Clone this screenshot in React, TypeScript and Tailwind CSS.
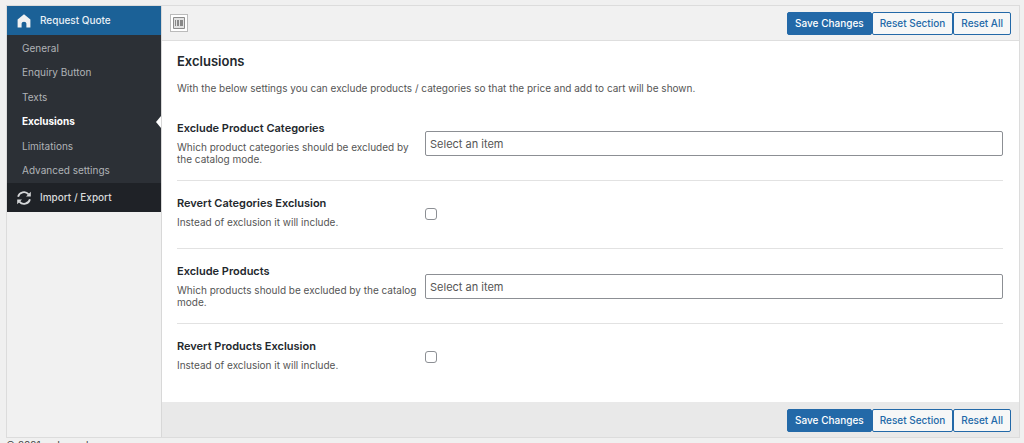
import type { ReactNode } from 'react'

const navItems = ['General', 'Enquiry Button', 'Texts', 'Exclusions', 'Limitations', 'Advanced settings']

function ActionButtons() {
  return (
    <div className="flex">
      <button type="button" className="h-[23px] px-[7px] rounded-xs border border-[#2369a8] bg-[#2369a8] text-white text-[10px] font-medium">
        Save Changes
      </button>
      <button type="button" className="h-[23px] px-[7px] rounded-xs border border-[#2369a8] bg-[#f6f7f7] text-[#2369a8] text-[10px] font-medium">
        Reset Section
      </button>
      <button type="button" className="h-[23px] px-[7px] rounded-xs border border-[#2369a8] bg-[#f6f7f7] text-[#2369a8] text-[10px] font-medium">
        Reset All
      </button>
    </div>
  )
}

interface FieldProps {
  id: string
  title: string
  description: string
  children: ReactNode
}

function Field({ id, title, description, children }: FieldProps) {
  return (
    <div className="flex min-h-[68px] py-[15px] border-b border-[#e2e2e2] last:border-b-0">
      <div className="w-[248px] shrink-0 pr-2">
        <label htmlFor={id} className="block text-[11px] leading-[14px] font-semibold text-[#23282d]">
          {title}
        </label>
        <p className="mt-1.5 text-[10px] leading-[12px] text-[#555]">{description}</p>
      </div>
      <div className="flex-1 pt-2.5">{children}</div>
    </div>
  )
}

function SelectField({ id }: { id: string }) {
  return (
    <input
      id={id}
      type="text"
      placeholder="Select an item"
      className="block w-full h-[25px] px-1 rounded-xs border border-[#8c8f94] bg-white text-[11px] text-[#444] placeholder:text-[#555]"
    />
  )
}

function CheckField({ id }: { id: string }) {
  return (
    <input
      id={id}
      type="checkbox"
      className="block mt-0.5 size-3 appearance-none rounded-[3px] border border-[#8c8f94] bg-white checked:bg-[#2369a8]"
    />
  )
}

export default function App() {
  return (
    <div className="h-screen overflow-hidden bg-[#f0f0f0] pt-[5px] pl-1.5 pr-1 font-['Inter','Liberation_Sans',sans-serif]">
      <div className="flex border border-[#dcdcdc] bg-[#f1f1f1]">
        <aside className="w-[155px] shrink-0 border-r border-[#d8d8d8]">
          <nav>
            <a href="#quote" className="flex items-center gap-[9px] h-[29px] pl-2.5 bg-[#1b6197] text-[10px] font-medium text-[#e8f0f6]">
              <svg viewBox="0 0 14 14" className="size-3.5" fill="#f1f1f1">
                <path d="M7 .2 13.4 5.6V13.6H9.4V9.6Q9.4 7.8 7 7.8T4.6 9.6V13.6H.6V5.6Z" />
              </svg>
              Request Quote
            </a>
            <ul className="grid auto-rows-fr h-[148px] pt-px bg-[#2c3036]">
              {navItems.map(item => (
                <li key={item} className="relative flex items-center">
                  {item === 'Exclusions' ? (
                    <>
                      <a href="#exclusions" aria-current="page" className="flex-1 pl-[15px] text-[10px] font-bold text-white">
                        {item}
                      </a>
                      <svg viewBox="0 0 5 12" className="absolute right-0 w-[5px] h-3" fill="#fff">
                        <path d="M5 0v12L0 6z" />
                      </svg>
                    </>
                  ) : (
                    <a href="#section" className="flex-1 pl-[15px] text-[10px] text-[#b0b3b6]">
                      {item}
                    </a>
                  )}
                </li>
              ))}
            </ul>
            <a href="#import" className="flex items-center gap-[9px] h-[29px] pl-2.5 bg-[#1f2227] text-[10px] font-medium text-[#d9dadb]">
              <svg viewBox="0 0 14 14" className="size-3.5" fill="none" stroke="#d5d7d9" strokeWidth="1.8">
                <path d="M1.1 5.8A6 6 0 0 1 11.6 3.4M12.9 8.2A6 6 0 0 1 2.4 10.6" />
                <path d="M13.8.8V5.6H9ZM.2 13.2V8.4H5Z" fill="#d5d7d9" stroke="none" />
              </svg>
              Import / Export
            </a>
          </nav>
        </aside>

        <main className="flex-1 min-w-0">
          <header className="flex items-center justify-between h-[35px] px-2 border-b border-[#dedede] bg-[#f1f1f1]">
            <button type="button" aria-label="Expand options" className="flex items-center justify-center size-[18px] border border-[#bbb] bg-white">
              <svg viewBox="0 0 12 12" className="size-3" fill="none">
                <path d="M.5 .5h11v11H.5z" fill="#e2e2e2" stroke="#8c8c8c" />
                <path d="M2.5 3v6M4.5 3v6M5.5 3v6M7.5 3v6M8.5 3v6M9.5 3v6" stroke="#888" />
              </svg>
            </button>
            <ActionButtons />
          </header>

          <section className="bg-white pl-[15px] pr-4 pb-2.5">
            <h1 className="pt-3 text-[13px] leading-4 font-semibold text-[#23282d]">Exclusions</h1>
            <p className="mt-3 mb-[11px] text-[10px] leading-[14px] text-[#555]">
              With the below settings you can exclude products / categories so that the price and add to cart will be shown.
            </p>
            <Field id="exclude-categories" title="Exclude Product Categories" description="Which product categories should be excluded by the catalog mode.">
              <SelectField id="exclude-categories" />
            </Field>
            <Field id="revert-categories" title="Revert Categories Exclusion" description="Instead of exclusion it will include.">
              <CheckField id="revert-categories" />
            </Field>
            <Field id="exclude-products" title="Exclude Products" description="Which products should be excluded by the catalog mode.">
              <SelectField id="exclude-products" />
            </Field>
            <Field id="revert-products" title="Revert Products Exclusion" description="Instead of exclusion it will include.">
              <CheckField id="revert-products" />
            </Field>
          </section>

          <footer className="flex items-center justify-end h-[35px] pt-0.5 pr-2 bg-[#e9e9e9]">
            <ActionButtons />
          </footer>
        </main>
      </div>
      <p className="text-[10px] leading-[14px] text-[#444]">© 2021 weLaunch</p>
    </div>
  )
}
